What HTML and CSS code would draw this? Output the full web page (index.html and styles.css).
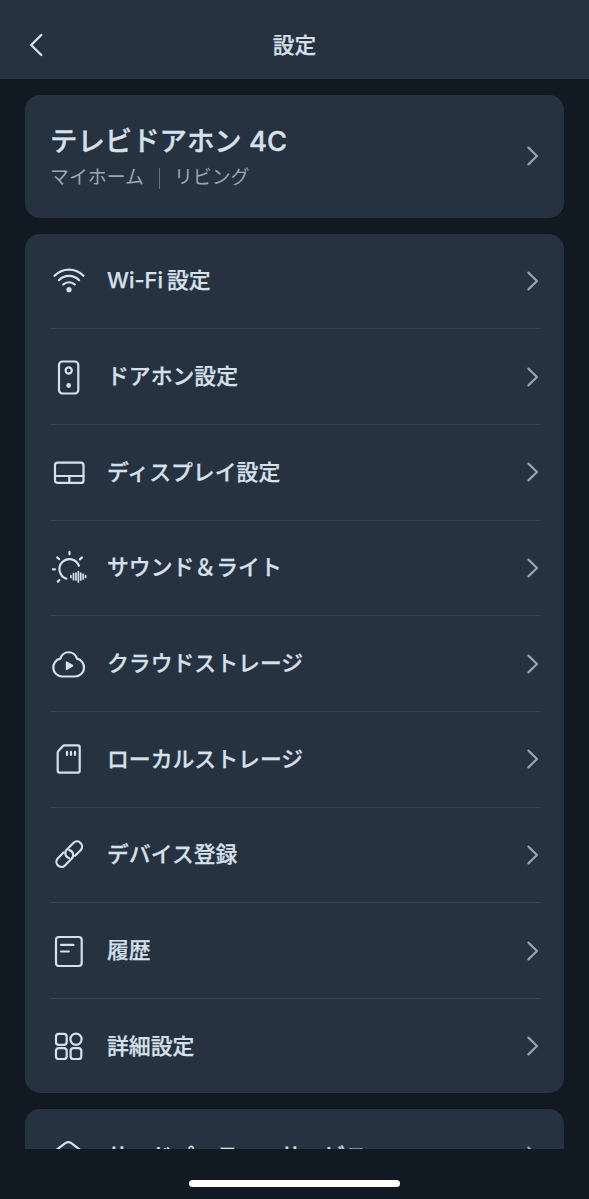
FILE: index.html
```html
<!DOCTYPE html>
<html lang="ja">
<head>
<meta charset="utf-8">
<title>設定</title>
<link rel="stylesheet" href="styles.css">
</head>
<body>
<svg width="0" height="0" class="defs">
  <symbol id="chevron" viewBox="0 0 14 22"><path d="M2.4 2.6L11 11l-8.600 8.400"/></symbol>
</svg>
<div class="screen">
  <header class="header">
    <svg class="back" viewBox="0 0 16 26"><path d="M13.300 3L3.200 13l10.100 10"/></svg>
    <h1 class="title">設定</h1>
  </header>
  <main class="content">
    <section class="card device">
      <div>
        <h2 class="device-name">テレビドアホン 4C</h2>
        <p class="device-place"><span>マイホーム</span><span class="bar"></span><span>リビング</span></p>
      </div>
      <svg class="chevron"><use href="#chevron"/></svg>
    </section>
    <ul class="card list">
      <li class="row">
        <svg class="icon" viewBox="0 0 38 38"><path d="M4.500 13.800A20 20 0 0 1 33.500 13.800M8.900 18.200A14 14 0 0 1 29.100 18.200M13.200 22.500A8.600 8.600 0 0 1 24.800 22.500"/><circle class="fill" cx="19" cy="27.700" r="2.600"/></svg>
        <span class="label">Wi-Fi<span class="kern">設定</span></span><svg class="chevron"><use href="#chevron"/></svg>
      </li>
      <li class="row">
        <svg class="icon" viewBox="0 0 38 38"><rect x="9" y="3.500" width="19.300" height="32" rx="3.500"/><circle cx="18.700" cy="12.500" r="3.100"/><circle class="fill" cx="18.700" cy="27.500" r="2.400"/></svg>
        <span class="label">ドアホン設定</span><svg class="chevron"><use href="#chevron"/></svg>
      </li>
      <li class="row">
        <svg class="icon" viewBox="0 0 38 38"><rect x="5" y="9.700" width="28.500" height="20.200" rx="2.500"/><path d="M5 23H33.500M19.300 23V30"/></svg>
        <span class="label">ディスプレイ設定</span><svg class="chevron"><use href="#chevron"/></svg>
      </li>
      <li class="row">
        <svg class="icon" viewBox="0 0 38 38"><path d="M28.900 16.800A10 10 0 1 0 16.300 29.600M19.500 2.900V5.300M7.200 8.400L9.200 10.200M32 8.400L29.900 10.400M2.800 20.300H4.900M7.800 32.600L9.400 31"/><path class="wave" d="M21 26.700V28.500M23.500 24.600V30.700M26 24.200V31M28.400 22.600V33M30.800 24.200V31M33.200 25.300V29.900M35.600 26.700V28.500"/></svg>
        <span class="label">サウンド＆ライト</span><svg class="chevron"><use href="#chevron"/></svg>
      </li>
      <li class="row">
        <svg class="icon" viewBox="0 0 38 38"><path d="M12 31.500H25.300A9 9 0 0 0 26.900 13.700A8.500 8.500 0 0 0 10.400 13.700A9 9 0 0 0 12 31.500Z"/><path class="fill" d="M15.800 17.200q0-1.300 1.200-.7l5.800 3.300q1.200.9 0 1.800l-5.800 3.500q-1.200.6-1.200-.7z"/></svg>
        <span class="label">クラウドストレージ</span><svg class="chevron"><use href="#chevron"/></svg>
      </li>
      <li class="row">
        <svg class="icon" viewBox="0 0 38 38"><path d="M14.500 5.300H27.800Q29.700 5.300 29.700 7.200V30.800Q29.700 32.700 27.800 32.700H9.600Q7.700 32.700 7.700 30.800V12.700Q7.700 11.500 8.600 10.700L13 6Q13.600 5.300 14.500 5.300ZM17 11.800V15M21 11.800V15M25 11.800V15"/></svg>
        <span class="label">ローカルストレージ</span><svg class="chevron"><use href="#chevron"/></svg>
      </li>
      <li class="row">
        <svg class="icon" viewBox="0 0 38 38"><path d="M19.300 22.200A5.100 5.100 0 0 1 16.900 13.500L23.600 6.700A5.100 5.100 0 0 1 30.800 13.900L25 19.800"/><path d="M19.200 14.100A5.100 5.100 0 0 1 21.600 22.800L14.900 29.600A5.100 5.100 0 0 1 7.700 22.400L13.500 16.500"/></svg>
        <span class="label">デバイス登録</span><svg class="chevron"><use href="#chevron"/></svg>
      </li>
      <li class="row">
        <svg class="icon" viewBox="0 0 38 38"><rect x="6" y="5" width="25.700" height="29" rx="3"/><path d="M11 12.900H23.400M11 19.500H18.800"/></svg>
        <span class="label">履歴</span><svg class="chevron"><use href="#chevron"/></svg>
      </li>
      <li class="row">
        <svg class="icon" viewBox="0 0 38 38"><rect x="6" y="6.900" width="10.700" height="10.900" rx="2.800"/><circle cx="26" cy="12.300" r="5.600"/><rect x="6" y="21.100" width="10.700" height="10.900" rx="2.800"/><rect x="20.600" y="21.100" width="10.700" height="10.900" rx="2.800"/></svg>
        <span class="label">詳細設定</span><svg class="chevron"><use href="#chevron"/></svg>
      </li>
    </ul>
    <ul class="card list">
      <li class="row">
        <svg class="icon" viewBox="0 0 38 38"><path d="M6 13.200L15.600 5.900Q18.300 4.200 21 5.900L30.600 13.200V30Q30.600 33 27.600 33H9Q6 33 6 30Z"/></svg>
        <span class="label">サードパーティーサービス</span><svg class="chevron"><use href="#chevron"/></svg>
      </li>
    </ul>
  </main>
  <footer class="footer"><div class="home-bar"></div></footer>
</div>
</body>
</html>
```

FILE: styles.css
```css
* {
  box-sizing: border-box;
  margin: 0;
  padding: 0;
}

body {
  background: #111923;
  color: #d6e0eb;
  font-family: Inter, "Noto Sans CJK JP", sans-serif;
}

svg {
  flex: none;
  fill: none;
  stroke: currentColor;
  stroke-width: 2.2;
  stroke-linecap: round;
  stroke-linejoin: round;
}

.defs {
  display: none;
}

.screen {
  display: flex;
  flex-direction: column;
  height: 1199px;
  overflow: hidden;
}

.header {
  display: grid;
  grid-template-columns: 60px 1fr 60px;
  align-items: center;
  flex: none;
  height: 79px;
  padding: 11px 0 0;
  background: #273240;
  border-bottom: 1px solid #2d3947;
}

.back {
  width: 16px;
  height: 26px;
  margin-left: 28px;
  stroke-width: 2.4;
}

.title {
  font-size: 21.700px;
  font-weight: 500;
  line-height: 32px;
  text-align: center;
  -webkit-text-stroke: 0.25px currentColor;
}

.content {
  display: flex;
  flex-direction: column;
  flex: none;
  gap: 16px;
  height: 1070px;
  padding: 16px 25px 0;
  overflow: hidden;
}

.card {
  flex: none;
  background: #273240;
  border-radius: 15px;
}

.device {
  display: flex;
  align-items: center;
  justify-content: space-between;
  height: 122.500px;
  padding: 0 24px 0 25px;
}

.device-name {
  padding: 2px 0;
  font-size: 27.400px;
  font-weight: 500;
  line-height: 40px;
  -webkit-text-stroke: 0.35px currentColor;
}

.device-place {
  display: flex;
  align-items: center;
  color: #9aa6b4;
  font-size: 18.900px;
  line-height: 30px;
}

.bar {
  width: 1px;
  height: 21px;
  margin: 0 14px 0 15px;
  background: #66717f;
}

.list {
  padding: 0 24px 0 25px;
  list-style: none;
}

.row {
  display: flex;
  align-items: center;
  height: 95.700px;
  border-bottom: 1px solid #384351;
}

.row:last-child {
  height: 94px;
  border-bottom: 0;
}

.icon {
  width: 38px;
  height: 38px;
  margin-right: 19px;
}

.icon .fill {
  fill: currentColor;
  stroke: none;
}

.icon .wave {
  stroke-width: 1.700;
}

.label {
  flex: 1;
  padding-bottom: 1px;
  font-size: 21.850px;
  font-weight: 500;
  line-height: 32px;
  white-space: nowrap;
  -webkit-text-stroke: 0.25px currentColor;
}

.kern {
  margin-left: 4px;
}

.chevron {
  width: 14px;
  height: 22px;
  color: #98a3b0;
}

.footer {
  display: flex;
  justify-content: center;
  flex: 1;
  padding-top: 31px;
}

.home-bar {
  width: 211px;
  height: 7px;
  border-radius: 4px;
  background: #fff;
}
```
